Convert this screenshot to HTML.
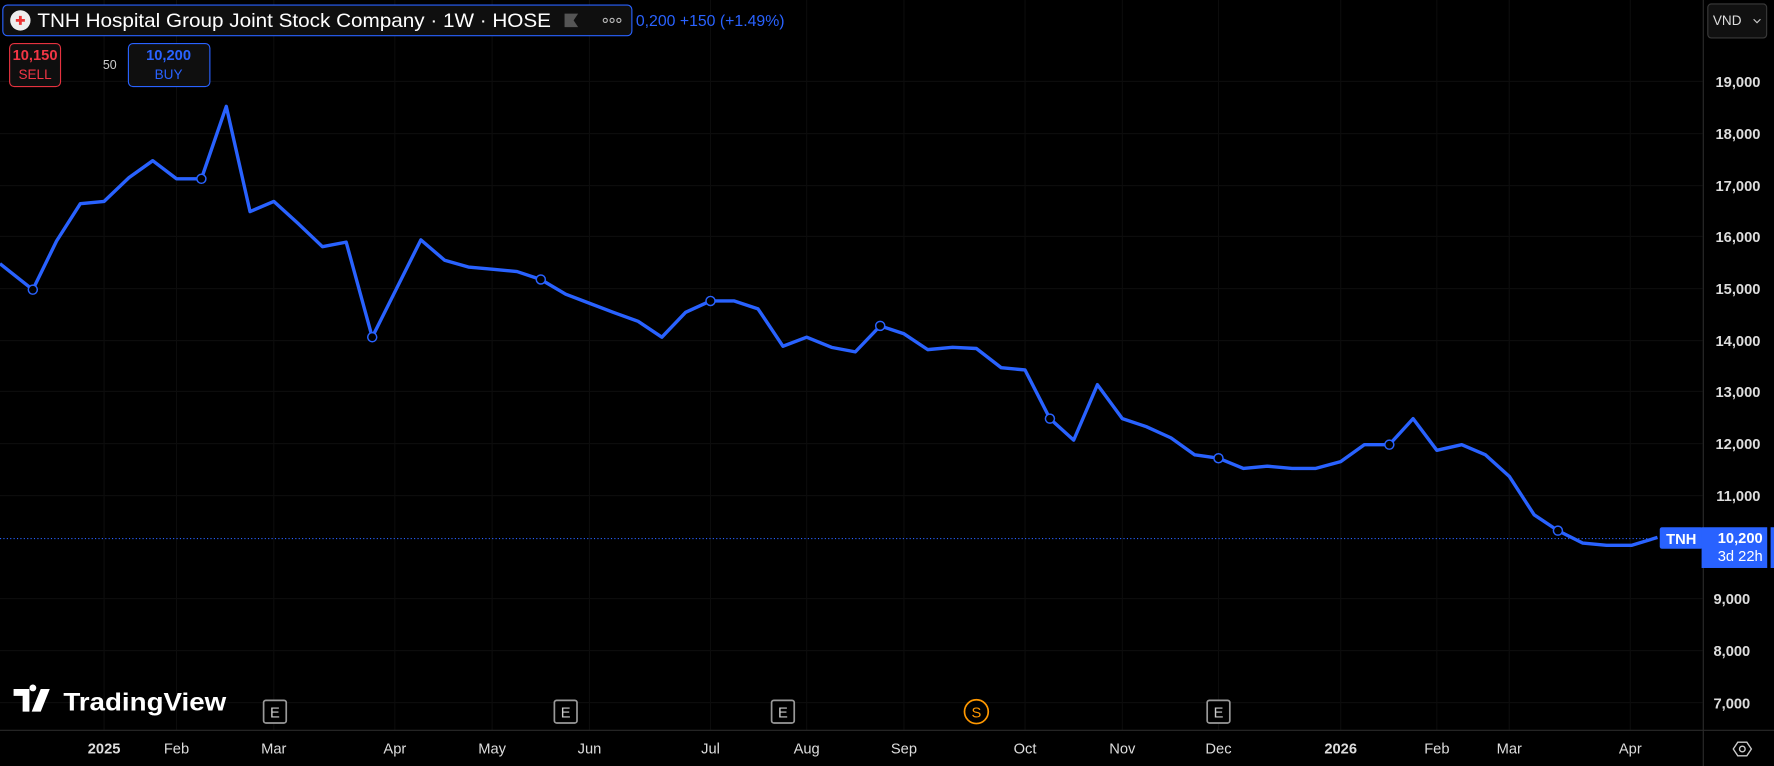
<!DOCTYPE html>
<html><head><meta charset="utf-8"><style>
html,body{margin:0;padding:0;background:#000;width:1774px;height:766px;overflow:hidden}
svg{display:block}
text{font-family:"Liberation Sans",sans-serif}
</style></head><body>
<svg width="1774" height="766" viewBox="0 0 1568 677" xmlns="http://www.w3.org/2000/svg">
<rect width="1568" height="677" fill="#000"/>
<g stroke="#0c0c0c" stroke-width="1">
<line x1="0" y1="72" x2="1505" y2="72"/><line x1="0" y1="118" x2="1505" y2="118"/><line x1="0" y1="164" x2="1505" y2="164"/><line x1="0" y1="209" x2="1505" y2="209"/><line x1="0" y1="255" x2="1505" y2="255"/><line x1="0" y1="301" x2="1505" y2="301"/><line x1="0" y1="346" x2="1505" y2="346"/><line x1="0" y1="392" x2="1505" y2="392"/><line x1="0" y1="438" x2="1505" y2="438"/><line x1="0" y1="529" x2="1505" y2="529"/><line x1="0" y1="575" x2="1505" y2="575"/><line x1="0" y1="621" x2="1505" y2="621"/>
<line x1="92" y1="0" x2="92" y2="645"/><line x1="156" y1="0" x2="156" y2="645"/><line x1="242" y1="0" x2="242" y2="645"/><line x1="349" y1="0" x2="349" y2="645"/><line x1="435" y1="0" x2="435" y2="645"/><line x1="521" y1="0" x2="521" y2="645"/><line x1="628" y1="0" x2="628" y2="645"/><line x1="713" y1="0" x2="713" y2="645"/><line x1="799" y1="0" x2="799" y2="645"/><line x1="906" y1="0" x2="906" y2="645"/><line x1="992" y1="0" x2="992" y2="645"/><line x1="1077" y1="0" x2="1077" y2="645"/><line x1="1185" y1="0" x2="1185" y2="645"/><line x1="1270" y1="0" x2="1270" y2="645"/><line x1="1334" y1="0" x2="1334" y2="645"/><line x1="1441" y1="0" x2="1441" y2="645"/>
</g>
<line x1="0" y1="645.5" x2="1568" y2="645.5" stroke="#2a2a2a"/>
<line x1="1505.5" y1="0" x2="1505.5" y2="677" stroke="#2a2a2a"/>
<line x1="0" y1="476" x2="1465" y2="476" stroke="#2962ff" stroke-dasharray="1,2" stroke-width="1"/>
<polyline fill="none" stroke="#2962ff" stroke-width="3" stroke-linejoin="round" points="0,233 10,241 29,256 50,213 71,180 92,178 114,157 135,142 156,158 178,158 200,94 221,187 242,178 264,198 285,218 306,214 329,298 372,212 393,230 414,236 436,238 457,240 478,247 500,260 521,268 542,276 564,284 585,298 606,276 628,266 649,266 670,273 692,306 713,298 735,307 756,311 778,288 799,295 820,309 842,307 863,308 885,325 906,327 928,370 949,389 970,340 992,370 1013,377 1035,387 1056,402 1077,405 1099,414 1120,412 1142,414 1163,414 1185,408 1206,393 1228,393 1249,370 1270,398 1292,393 1313,402 1334,421 1356,455 1377,469 1399,480 1420,482 1442,482 1465,475"/>
<g fill="#000" stroke="#2962ff" stroke-width="1.3">
<circle cx="29" cy="256" r="4"/><circle cx="178" cy="158" r="4"/><circle cx="329" cy="298" r="4"/><circle cx="478" cy="247" r="4"/><circle cx="628" cy="266" r="4"/><circle cx="778" cy="288" r="4"/><circle cx="928" cy="370" r="4"/><circle cx="1077" cy="405" r="4"/><circle cx="1228" cy="393" r="4"/><circle cx="1377" cy="469" r="4"/>
</g>
<rect x="2.5" y="4.5" width="556" height="27" rx="4" fill="#0f0f0f" stroke="#2962ff"/>
<circle cx="18" cy="18" r="9" fill="#eee"/><path d="M14 18h8M18 14v8" stroke="#e33" stroke-width="2.5"/>
<text x="33" y="24" fill="#fff" font-size="17" textLength="454" lengthAdjust="spacingAndGlyphs">TNH Hospital Group Joint Stock Company · 1W · HOSE</text>
<path d="M499 12h12l-4 6 4 6h-12z" fill="#555"/>
<g fill="none" stroke="#bbb" stroke-width="1"><circle cx="535" cy="18" r="1.8"/><circle cx="541" cy="18" r="1.8"/><circle cx="547" cy="18" r="1.8"/></g>
<text x="562" y="23" fill="#2962ff" font-size="14">0,200  +150 (+1.49%)</text>
<rect x="8.5" y="38.5" width="45" height="38" rx="4" fill="#0f0f0f" stroke="#e5323f"/>
<text x="31" y="53" fill="#f23645" font-size="13" text-anchor="middle" font-weight="bold">10,150</text>
<text x="31" y="70" fill="#f23645" font-size="12" text-anchor="middle">SELL</text>
<text x="97" y="61" fill="#ccc" font-size="11" text-anchor="middle">50</text>
<rect x="113.5" y="38.5" width="72" height="38" rx="4" fill="#0f0f0f" stroke="#2962ff"/>
<text x="149" y="53" fill="#2962ff" font-size="13" text-anchor="middle" font-weight="bold">10,200</text>
<text x="149" y="70" fill="#2962ff" font-size="12" text-anchor="middle">BUY</text>
<rect x="1509.5" y="3.5" width="52" height="30" rx="3" fill="#111" stroke="#3a3a3a"/>
<text x="1514" y="22" fill="#ddd" font-size="12">VND</text>
<path d="M1550 17l3 3 3-3" stroke="#ccc" fill="none"/>
<g fill="#ddd" font-size="13" text-anchor="end" font-weight="bold">
<text x="1556" y="77">19,000</text><text x="1556" y="123">18,000</text><text x="1556" y="169">17,000</text><text x="1556" y="214">16,000</text><text x="1556" y="260">15,000</text><text x="1556" y="306">14,000</text><text x="1556" y="351">13,000</text><text x="1556" y="397">12,000</text><text x="1556" y="443">11,000</text><text x="1547" y="534">9,000</text><text x="1547" y="580">8,000</text><text x="1547" y="626">7,000</text>
</g>
<rect x="1467" y="466" width="38" height="19" rx="2" fill="#2962ff"/>
<text x="1486" y="481" fill="#fff" font-size="13" text-anchor="middle" font-weight="bold">TNH</text>
<rect x="1504" y="466" width="58" height="36" fill="#2962ff"/>
<rect x="1565" y="466" width="3" height="36" fill="#2962ff"/>
<text x="1558" y="480" fill="#fff" font-size="13" text-anchor="end" font-weight="bold">10,200</text>
<text x="1558" y="496" fill="#fff" font-size="13" text-anchor="end">3d 22h</text>
<g fill="#ddd" font-size="13" text-anchor="middle">
<text x="92" y="666" font-weight="bold">2025</text><text x="156" y="666">Feb</text><text x="242" y="666">Mar</text><text x="349" y="666">Apr</text><text x="435" y="666">May</text><text x="521" y="666">Jun</text><text x="628" y="666">Jul</text><text x="713" y="666">Aug</text><text x="799" y="666">Sep</text><text x="906" y="666">Oct</text><text x="992" y="666">Nov</text><text x="1077" y="666">Dec</text><text x="1185" y="666" font-weight="bold">2026</text><text x="1270" y="666">Feb</text><text x="1334" y="666">Mar</text><text x="1441" y="666">Apr</text>
</g>
<path d="M1532 662l4-6h8l4 6-4 6h-8z" fill="none" stroke="#ccc" stroke-width="1.2"/><circle cx="1540" cy="662" r="2.5" fill="none" stroke="#ccc" stroke-width="1.2"/>
<g fill="#000" stroke="#999" stroke-width="1.5">
<rect x="233" y="619" width="20" height="20" rx="2"/><rect x="490" y="619" width="20" height="20" rx="2"/><rect x="682" y="619" width="20" height="20" rx="2"/><rect x="1067" y="619" width="20" height="20" rx="2"/>
</g>
<g fill="#ccc" font-size="13" text-anchor="middle"><text x="243" y="634">E</text><text x="500" y="634">E</text><text x="692" y="634">E</text><text x="1077" y="634">E</text></g>
<circle cx="863" cy="629" r="10.5" fill="#000" stroke="#ff9800" stroke-width="1.5"/>
<text x="863" y="634" fill="#ff9800" font-size="13" text-anchor="middle">S</text>
<path d="M12 609h14v20h-6v-14h-8z M29 611a3 3 0 1 1 0.1 0z M36 609h8l-8 20h-8z" fill="#fff"/>
<text x="56" y="628" fill="#fff" font-size="22" font-weight="bold" textLength="144" lengthAdjust="spacingAndGlyphs">TradingView</text>
</svg>
</body></html>
